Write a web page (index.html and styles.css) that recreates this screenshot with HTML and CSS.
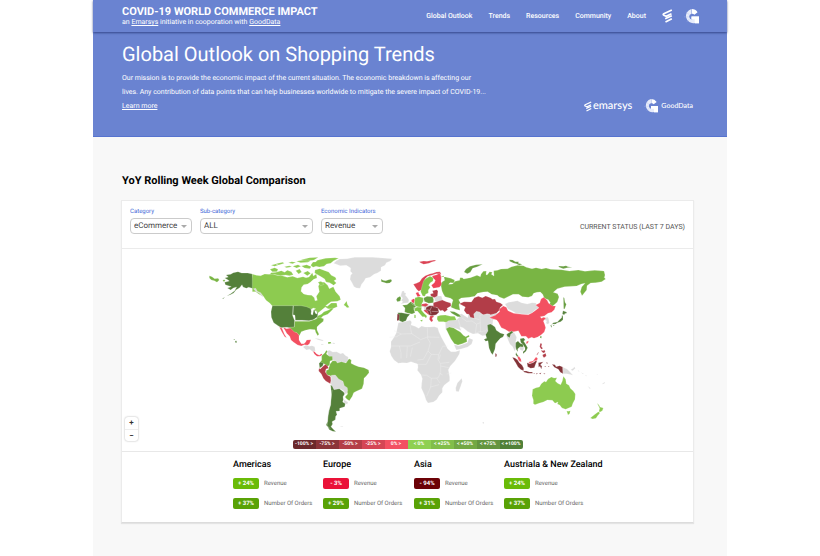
FILE: index.html
```html
<!DOCTYPE html>
<html lang="en">
<head>
<meta charset="utf-8">
<meta name="viewport" content="width=device-width, initial-scale=1">
<title>COVID-19 World Commerce Impact</title>
<link rel="stylesheet" href="styles.css">
</head>
<body>
<svg class="defs" aria-hidden="true">
  <symbol id="emarsys" viewBox="0 0 32 42">
    <path d="M29 3 5 14q-4 3 0 5l7 3 16-8M29 20 9 29M29 29 10 39" fill="none" stroke="#fff" stroke-width="5"/>
  </symbol>
  <symbol id="gooddata" viewBox="0 0 42 42">
    <path d="M21 0A20 20 0 1 0 30 39V40H42V21H21V29H25A8 8 0 1 1 21 13Z" fill="#e6ebfa"/>
    <path d="M22 0a20 20 0 0 1 16 9l-9 7a8 8 0 0 0-7-3zM21 21h21v19H30V29h-9z" fill="#fff"/>
    <path d="M5 8l10 8M0 22h13M8 36l8-9" stroke="#a9b8e8" stroke-width="1"/>
  </symbol>
</svg>
<div class="page">
  <header class="topbar">
    <div class="brand">
      <div class="brand-name">COVID-19 WORLD COMMERCE IMPACT</div>
      <div class="brand-sub">an <a href="#emarsys">Emarsys</a> initiative in cooporation with <a href="#gooddata">GoodData</a></div>
    </div>
    <nav class="nav">
      <a href="#outlook">Global Outlook</a>
      <a href="#trends">Trends</a>
      <a href="#resources">Resources</a>
      <a href="#community">Community</a>
      <a href="#about">About</a>
    </nav>
    <div class="marks">
      <svg class="mark-e"><use href="#emarsys"/></svg>
      <svg class="mark-g"><use href="#gooddata"/></svg>
    </div>
  </header>
  <section class="hero">
    <div class="intro">
      <h1>Global Outlook on Shopping Trends</h1>
      <p>Our mission is to provide the economic impact of the current situation. The economic breakdown is affecting our<br>lives. Any contribution of data points that can help businesses worldwide to mitigate the severe impact of COVID-19...<br><a href="#more">Learn more</a></p>
    </div>
    <div class="partners">
      <svg class="partner-e"><use href="#emarsys"/></svg><span class="word-e">emarsys</span>
      <svg class="partner-g"><use href="#gooddata"/></svg><span class="word-g">GoodData</span>
    </div>
  </section>
  <main>
    <h2>YoY Rolling Week Global Comparison</h2>
    <div class="card">
      <form class="filters">
        <div class="field"><label for="category">Category</label>
          <div class="pick"><select id="category"><option>eCommerce</option></select></div></div>
        <div class="field wide"><label for="sub">Sub-category</label>
          <div class="pick"><select id="sub"><option>ALL</option></select></div></div>
        <div class="field"><label for="indicator">Economic Indicators</label>
          <div class="pick"><select id="indicator"><option>Revenue</option></select></div></div>
        <div class="status">CURRENT STATUS (LAST 7 DAYS)</div>
      </form>
      <div class="map">
        <svg class="world" viewBox="-234 -3 1713 606" role="img" aria-label="World map of revenue change">
          <!-- North America -->
          <path class="g3" d="M28 77l8 3 8 6 10-1 4 5-7 7-8-5-9-2-6-6zM68 90l6-1 2 4-5 2z"/>
          <path class="g5" d="M157 72l-14-3-18 0-11-4-14 3-8 5-14 2 7 6-11 3 9 5 5 4-14 4 2 7 9 3 9 3-12 4 10 6 8-6 10-3-6 11-12 9-12 7 11-4 10-5 7-9 11-7 7-9 3 7 10 4 7-3 18 5zM66 146l9-5-5 5zM100 269l3-2 2 3zM105 273l4-1 2 5-4 2z"/>
          <path class="g1" d="M157 72l12 4 13 1 12-5 12 1 11-2 14 5 15 1 16 5 16-3 14 5 17-4 9 3 9-2 10-13 3 10 9-6 2 12-10 4-10 9-8 5-12 2-6 8-2 12 8 8 12 3 12 1 8 7 2 9 7-1-3-12 9-14-3-16 6-13 12 1 10 9 5 10 12-6 7 15 12 14 3 10-10 5-19 1-16 12 5 2 12-10 16 0 2 11-16 7-12-1-8-5-12 10-11 9-13 4-7 9-6-2 5-9-12-6-10-12-18-6-17 0H217l-8-9-11-8-7-11-14-7-10-8-10 0z"/>
          <path class="g1" d="M210 58l14-5 10 5-3 7-14 0zM228 67l16-5 10 5 8-6 12 4 6 9-12 3-11-2-16 2-20-4-12 1 4-6zM213 46l14-4 8 3-11 4zM228 41l20-4 5 3-17 5zM253 50l15-3 8 3-16 3zM265 38l10-3 13 2-10 4zM278 49l16-5 9 5-13 5zM287 62l12-5 6 9-9 6zM289 34l25-5 20 2-10 6-22 1zM304 48l16-4 14 6-5 6-15-2zM310 69l13-6 9 7-10 7zM345 60l14-4 16 6 11 4 8 10 12 6 3 6-7 4 7 7-8 7-12-8-11-2-4-9-13-8-8-5-9-5zM332 46l7-10 8 0 5-5 25-6 28-2 11 2-15 7-9 8-12 2-8 7-14 2-10-2-9 3zM303 29l26-6 26-1-13 8-20 4zM354 97l9-3 9 9-10 4z"/>
          <path class="g2" d="M348 212l4-14 12-5 8-8 12-4 12-7 4 2-7 8-10 9-14 5-8 9z"/>
          <path class="g1" d="M431 165l9-12 2 10 6 9-7 1-4-4z"/>
          <path class="gy" d="M160 116l7-1 5 9 10 4 9 12-5-1-9-10-9-4z"/>
          <path class="g5" d="M217 167h62l-1 30 6 15-1 20-12 2-10-2-18 1-9-6-13-9-7-16-1-17zM280 167h23l16 3 16 7 7 1 5 7 3-4 4 10-2 10-12 8-13 3-21-1H286l-1-15-6-2z"/>
          <path class="w" d="M332 179l8-5 7 2-6 4-3 15-5-2 1-11zM344 182l6 2 2 9-6-3z"/>
          <path class="g3" d="M284 214h44l20-7 8-5 15 4-1 8-11 9-8 8 0 9 6 13-4 4-6-10-2-8-15-1-14 3-12 4-6 12-9-9-8 2-10-12-2-6 14-1z"/>
          <path class="r1" d="M249 232l11 4 11-2 12 12 8 2 6 8 0 14 7 11 8 0 5-5 3-6 13-1-5 13-6 4-9-2-9 4-11-3-12-8-8-7-4-11-9-9-5-9zM238 231l8 4 7 17 7 11-6-3-8-13z"/>
          <path class="gy" d="M309 291l9-6 10 4 8-2 8 3 2 13-8 2-9-7-10 2zM344 265l12 1 15 5-4 2-13-4zM398 278l7 1-1 3-6-1zM363 282h7v2h-7z"/>
          <path class="r2" d="M339 304l5 1 6 7 8 4 6-5 3 3-7 5-9 0-8-7z"/>
          <path class="g3" d="M384 276l8 0 2 4-9 2z"/>
          <path class="gy" d="M401 40l8-8 10-5 22-1 23-4 55 0 28 2 29 2-5 7-12 5-4 8-12 6 0 10-11 7-10 4-12 9-13 3-5 9-7 8-5 13-10-1-8-4-6-12-6-10 2-12 5-6-6-6 1-10-13-8-18 1z"/>
          <path class="g4" d="M543 87l6 4 8 1 9-3 7-1 3 5-7 6-9 1-10-3-6-2z"/>
          <!-- South America -->
          <g transform="translate(300 270)">
            <path class="gy" d="M80 33l9-2 9 5 12-1 11 6 8-2 8 8 8 4-2 16-29 4-18-13-10-10z"/>
            <path class="g3" d="M65 47l9-8 5-8 3 3-3 8 9 7 9 0 1 12-8 2-1 13-7 3-9-7-13-5 5-6z"/>
            <path class="g3" d="M90 72l8-10 10 1 4 6 12-4 14 4 9-13 7 4-1 10 10 5 13 5 16 3 14 7 1 8-8 10-7 7-1 16-5 15-17 8-8 4-4 11-9 13-7-4-6-7 8-9-3-12-9-6-3-12-12-8-14-8-11-9-10-2-3-5 1-9 6-2z"/>
            <path class="g5" d="M57 70l5-4 9 4-3 8-9 6z"/>
            <path class="r4" d="M57 85l4 2 9-9 7-5 6 6 3 6-8 2-2 9 6 9 10 5 1 12-2 9-14-8-7-8-6-13-8-9z"/>
            <path class="gy" d="M94 106l12-1 10 12 13 7 4 13 9 6 1 9-4 10-7-2 1-6-13-8-18 6-6-6-3-15zM132 179l12 8-2 6-11-4z"/>
            <path class="g5" d="M92 134l5 5 5 10 16-3 13 10 3 6-5 8 1 9-2 7 8 5-2 9-15 5 0 8-11 1 3 10-4 5-1 10-10 6 2 7-5 8 7 8 8 7-10-1-10-5-5-9-5-5 5-11 1-17 3-16 5-16 2-31z"/>
            <path class="border" d="M96 150l-3 24-5 30-5 29-2 24 9 9"/>
            <path class="gy" d="M119 260l11-2-3 3z"/>
          </g>
          <!-- Europe -->
          <g transform="translate(540 0)">
            <path class="r3" d="M118 35l13-2 10 1 22-4 6 2-14 4-8 4-16 3-10-5zM100 103l9-3 10-5 7-10 10-8 13-5 10-2 10-4 11-1 4 8-15-2-14 5-12 3-8 8-3 14-3 17-13 6-6-6z"/>
            <path class="g2" d="M126 109l5-17 8-7 11-6 10 4-1 10-8 5-5 8 5 6-6 8 0 9-8 4-2 6-7-1-6-13z"/>
            <path class="r2" d="M156 78l14-4 10-5 4 12-1 14 4 8-9 9-18 3-6-9 9-8 3-7-6-6z"/>
            <path class="r4" d="M157 122l13-3 4 4-2 18-9 2-10-4-2-7 9-2z"/>
            <path class="gy" d="M163 143l9-5 12 0 4 11-4 6-19-1zM66 124l7-2-1 5 6 3-2 6 5 5 6 9-2 8-12 1-11 3 7-7-5-3 4-8-6-6zM130 166l28 0 18 10-6 17-20 3-17-14z"/>
            <path class="g4" d="M52 143l8-4 3 5-2 9-9 2-3-6z"/>
            <path class="r2" d="M107 129l8-3 2 6 5 5-9 4zM94 150l7-4 4 3-3 11-7-3z"/>
            <path class="g2" d="M105 143l12-3 12 3 1 10-5 10 5 5-11 4-12-3-4-9zM103 174l10-3 12 1-1 8 8 10 9 8-3 7-4-5-7 0-9-10-6-7-8 1zM120 211l8-2-2 6zM103 194l4 1 0 9-4 0z"/>
            <path class="g4" d="M131 144l10-5 17 1 3 9-1 9-14 2-14-6zM67 166l14-2 11-9 10 6 6 8-7 7 4 12-9 4-12-2-10-4 1-12z"/>
            <path class="g5" d="M53 188l12 0 20 4 5 1-8 9-4 10-10 5-10-5z"/>
            <path class="r5" d="M52 192l6 1-1 18-6 1z"/>
            <path class="r3" d="M124 163l14-3 8 4-9 6-11-2zM131 180l10-1 6 9 5 9-9-5-10-8zM150 198l9-1 3 3-6 4 3 8-5 4-6-8z"/>
            <path class="r5" d="M139 172l10-5 13 1 12 6 3 13-8 7-13 3-9-3-4-10-6-4z"/>
            <path class="r4" d="M160 158l14-4 13-4 12 5 13 4 1 9-12 7 2 4-9 7-6-5-7 1-10-10-11-1z"/>
            <path class="border" d="M139 179l11 2 3 11M150 181l5-11M155 184l20 1M94 160l12 8M134 150l-7 12M108 174l-8-2"/>
            <path class="g1" d="M172 199l10-3 14-1 16 4 12 0 5 10-3 5-15 0-10 4-10-3-15 0-5-7z"/>
          </g>
          <!-- Africa and Middle East -->
          <g transform="translate(540 180)">
            <path class="gy" d="M55 38l18-3 17-4 5 5-2 9 12 4 11 6 9-7 10 3 15 0 13-1 10 3 4 13 8 17 11 20 7 13 10 9 13 0 14-4-2 11-13 21-14 15-6 11 4 22 0 12-16 12-6 10 0 12-10 10-7 12-10 7-16 3-6-9-5-16-9-20 1-14 2-14-4-12-11-13 2-9-1-10-9-3-11-4-12 4-14-1-12 2-13-10-8-12-5-14 4-13 0-16 9-13 7-14zM245 205l2 9-6 18-5 13-8-1-1-10 5-15zM196 38l10-6 23-2 9-8-3-8 10-3 18 12 3-14 18-12 24 5 22 3 24 6-8 12-7 8-2 19-13 15 0 10-17 2-13-7-15 2-15-7-15-12-10-3 5 12-11-5-14-4-11 1-7 8-4-4zM222 104l15 3 25-9 5-14 12 5-4 13-12 9-20 6-14 3z"/>
            <path class="g3" d="M198 56l10-5 13 3 11 7 9 5 9 10 7 4 10-5 1 5-8 4 1 11-14 6-13 4-11-4-10-14-7-14z"/>
            <path class="g4" d="M209 4l14 1 14 8 6 7-10 0-18-10z"/>
            <path class="border" d="M42 62l22 10 31-1 27 18 20-8 36 1M90 45l5 27M28 82l22-2 14-8M142 52l1 33 8 14-7 24 10 10 22 1 12-25 16-1M32 108l25 0 34 0 29-12M58 108l5 20 0 18M82 110l-2 34M91 140l6-27M112 150l18-2 14-25M113 163l26 0 15-30M125 195l15 1 14 9 20-1 8-16 0-26-8-13 2-16M154 205l-2 26-12 28M170 205l10 14M152 231l25-7M182 168l24 5M182 160l26-3M177 149l4-15M200 192l14-3M178 189l10 6M235 30l9 28M246 24l14 10 16-1 14 10-4 27M262 9l16 14 20 6M290 42l27-9 20-5M286 70l25-10 18-26"/>
          </g>
          <!-- Asia -->
          <g transform="translate(840 0)">
            <path class="g3" d="M-118 80l14 1 16 4 12 5-2 9-12-1-4 5 11-1 8-8 14-3 1-8 7 0 4 4 20-4 20-7 10 4 2-7 7-9 9-1-1 11 4 0 7-9 8 2-3 6 8 5-1-16 11-1 11-4 20-1 12-6 18-4 17 1 9 5 17 4 12-3 17 4 13-3 14 4 32 1 24 4 27-3 20 4 29-3 28 2 3 12-2 8 4 4-12 8-18 3-15 1-11 8-1 13-14 17-5-12 4-14 10-11-11 2-14 6-36 2-22 6-12 11 13 4 4 10-5 15-16 14-6 3-5-5 6-10-6-9-12-4-5-12-7-7-10 1-10 3-5 8-11 4-18-2-11-7-17 0-15 7-12 6-14-5-6-5-17-3-12-8-13 1-18 4-8 9-16 3-24 2-8 5 5 9-4 6 3 17-13-3-14-6 2-9 4-13-7-5-17-5-5-8-4-9-3-15 3-12 8-5-3-14z"/>
            <path class="g4" d="M-48 66l6-9 12-8 18-5 20-1-16 7-14 5-7 12-9 4zM88 29l10 1 8 5 10 0-1 5 12 3-9 3-9-5-9-2-11-5zM235 48l15 1 8-2 6 3 13 2-15 1-12 3-12-4zM250 142l3 2 2 13 4 6-5 14-3-1z"/>
            <path class="r4" d="M-62 161l14-6 22 1 9-13 12-4 12 4 10-5 14 5 7 5 7-1 4 8 12 4 8 6-8 7-3 9-9 9-17 4-11-3-10 5-12-10-10-2-8 8 2 13-12-3-4-9-7-1-8-11 4-10z"/>
            <path class="gy" d="M75 162l11-5 10-2 16-3 12 6 18 4 14-4 12 1 1 6 9 5-3 5-10 5-10 10-13 3-17-1-17-2-11-7-13-6zM193 207l9-7 4 6 2 12-4 5-6-3 2-8-7-3zM0 195l28-3 8 22-9 10-9 18-16 4zM78 254l15-7 10 1 7 14-3 13 2 19-5 10-6-14-8-7-7-16zM123 286l9 7-3 10-9-4-2-9z"/>
            <path class="r1" d="M28 203l10-4 8-3 13-11-2-7 13-10 9 4 5 10 17 8 25 3 19 1 12-6 11-8 9-7-10-8 12-6 4-12 8-5 10 8 5 10 12 8 9 0-4 11-8 8-11 3-11 8-12 2 3 5 7-3 7 2-8 9 4 10 3 10-4 13-10 9-10 6-11 4-7-3-10 4-7-7-14 0-9-17-14 3-14 0-12-7-11-5-5-9-4-8-5-6zM139 275l7-3-2 7-5 3z"/>
            <path class="g5" d="M22 225l9-3 7 4 7 5 4 10 12 8 12 4-4 8-8 4-8 9-6 7-2 16-7 17-5-6-6-14-3-22-7 2-5-6 8-3-3-11 7-11zM80 253l15-10 5 4-8 6-3 10-7-4zM107 278l7-5 6 7 9 3 1 8-10-1-7 7 1 8-5-6-2-9zM120 266l11-2 5 6-5 3 6 10 6 10-5 11-9 7 0-6 6-5 0-7-7-10-6-6zM249 182l10 4 2 3-7 2-1 4-6-3zM246 194l3 6 0 9-7 6-10 3-5 4-9 0-5 3 7-7 12-2 8-8 5-5zM211 225l5 2-2 6zM219 225l6-1-5 4z"/>
            <path class="g4" d="M180 259l5 0-1 6-4-2z"/>
            <path class="r5" d="M46 309l4 4 0 6-4 2z"/>
          </g>
          <!-- South-east Asia and Oceania -->
          <g transform="translate(840 240)">
            <path class="g5" d="M108 67l4 7 4 5-4 2-5-7z"/>
            <path class="r1" d="M112 79l6 1 5 8 1 8-7-3-3-7zM146 96l13-3 9-12 5 4-2 7-8 0-6 6-10 2z"/>
            <path class="r5" d="M97 82l8 2 8 6 5 8 8 7 5 9 0 8-8-3-9-8-7-13-5-7zM131 123l8 0 9 3 9 0 1 4-14 0-13-4zM141 98l8 3 10-3 7-5 5 0-4 9-4 11-11 2-9-5zM175 98l8-1 7-2-6 6-3 4 5 3-2 10-4-9-4 3zM161 129l4 1-3 2zM168 130l7 1-6 2zM177 130l7-2-3 5zM190 131l6-2-3 4zM199 95l4 4-2 4zM193 108l5 0-2 3zM204 108l5 1-4 2zM216 103l9 1 3 6 11-3 9 4 1 20-8-4-6-9-12-6z"/>
            <path class="r4" d="M181 40l5 1-2 9 5 5-5 3-5-8zM183 60l6 2 5-2 2 6-5 3-5-3zM188 74l9-4 2 8-7 5-4-5zM170 74l5-8 1 2-5 8z"/>
            <path class="gy" d="M249 112l12 5 7 7 11 12-11-3-9-2-10 0zM272 119l8-4 3-5 3 5-8 7zM293 121l5 2-1 2zM303 127l8 4-2 2zM314 134l6 3-1 2zM323 168l9 7-3 1zM367 161l7-5 1 3-7 4zM8 276l4 1 0 4-4-1zM350 132l2 0 1 4z"/>
            <path class="g1" d="M158 178l10-5 10-2 6-10 9-7 5 2 6-9 10-6 8 3 9-1-5 10 7 7 9 4 5-11 3-14 7 9 2 13 8 5 4 9 9 8 6 9-1 16-6 11-4 11-9 4-9 4-11-4-7-9-7-3 2-6-9 4-8-9-15-1-12 6-13 4-12 4-5-3 0-11-4-13zM260 243l5 1 6-2-2 9-5 4zM351 219l6 6 3 6 10 3-3 8-8 5-2-4 2-8zM355 245l5 4-7 8-5 8-10 2-7-3 11-9z"/>
          </g>
        </svg>
        <div class="zoom">
          <button type="button" aria-label="Zoom in">+</button>
          <button type="button" aria-label="Zoom out">−</button>
        </div>
        <div class="legend">
          <span class="n100">-100% &gt;</span><span class="n75">-75% &gt;</span><span class="n50">-50% &gt;</span><span class="n25">-25% &gt;</span><span class="n0">0% &gt;</span><span class="p0">&lt; 0%</span><span class="p25">&lt; +25%</span><span class="p50">&lt; +50%</span><span class="p75">&lt; +75%</span><span class="p100">&lt; +100%</span>
        </div>
      </div>
      <div class="regions">
        <section><h3>Americas</h3>
          <div class="stat"><b class="lime">+ 24%</b>Revenue</div>
          <div class="stat"><b class="green">+ 37%</b>Number Of Orders</div></section>
        <section><h3>Europe</h3>
          <div class="stat"><b class="red">- 3%</b>Revenue</div>
          <div class="stat"><b class="green">+ 29%</b>Number Of Orders</div></section>
        <section><h3>Asia</h3>
          <div class="stat"><b class="maroon">- 94%</b>Revenue</div>
          <div class="stat"><b class="green">+ 31%</b>Number Of Orders</div></section>
        <section><h3>Austriala &amp; New Zealand</h3>
          <div class="stat"><b class="lime">+ 24%</b>Revenue</div>
          <div class="stat"><b class="green">+ 37%</b>Number Of Orders</div></section>
      </div>
    </div>
  </main>
</div>
</body>
</html>
```
FILE: styles.css
```css
* { box-sizing: border-box; }
body { margin: 0; background: #fff; font-family: Roboto, "Liberation Sans", sans-serif; text-rendering: geometricPrecision; }
h1, h2, h3, p { margin: 0; }
.defs { position: absolute; width: 0; height: 0; }
.page { max-width: 634px; min-height: 100vh; margin: 0 auto; background: #f8f8f8; }

.topbar {
  position: relative;
  display: flex;
  align-items: center;
  height: 32px;
  padding: 0 28px 0 29px;
  background: #6a83d1;
  color: #fff;
  box-shadow: 0 1px 2px rgba(30, 45, 110, .7);
}
.brand { flex: 1; }
.brand-name { font-size: 11px; line-height: 12px; font-weight: 700; }
.brand-sub { font-size: 7px; line-height: 8px; }
a { color: inherit; }
.nav { display: flex; gap: 16px; font-size: 7px; font-weight: 500; }
.nav a { text-decoration: none; }
.marks { display: flex; align-items: center; gap: 11px; margin-left: 16px; }
.mark-e { width: 11px; height: 14px; }
.mark-g { width: 15px; height: 15px; }

.hero {
  display: flex;
  justify-content: space-between;
  align-items: flex-end;
  height: 105px;
  padding: 0 34px 23px 29px;
  background: #6a83d1;
  border-bottom: 1px solid #5673cf;
  color: #fff;
}
.intro { white-space: nowrap; }
h1 { font-size: 20px; line-height: 24px; font-weight: 400; }
.intro p { margin-top: 5px; font-size: 7px; line-height: 14px; }
.partners { display: flex; align-items: center; }
.partner-e { width: 8px; height: 11px; margin-right: 1px; }
.partner-g { width: 14px; height: 14px; margin: 0 3px 0 12px; }
.word-e { font: 500 11px/12px Lato, sans-serif; }
.word-g { font: 500 7px/12px Lato, sans-serif; }

main { padding: 37px 33px 32px 28px; }
h2 { padding-left: 1px; font-size: 11px; line-height: 14px; font-weight: 700; color: #000; }
.card {
  margin-top: 12px;
  background: #fff;
  border: 1px solid #ebebeb;
  border-bottom-color: #dcdcdc;
  box-shadow: 0 1px 1px #e4e4e4;
}

.filters {
  display: flex;
  gap: 8px;
  height: 48px;
  padding: 7px 8px 0;
  border-bottom: 1px solid #ebebeb;
}
.field { width: 62px; }
.field.wide { width: 113px; }
.field label { display: block; margin-bottom: 2px; font-size: 6px; line-height: 8px; color: #4468d8; white-space: nowrap; }
.pick { display: grid; align-items: center; }
.pick select, .pick::after { grid-area: 1 / 1; }
.pick select {
  appearance: none;
  width: 100%;
  height: 16px;
  padding: 0 3px;
  border: 1px solid #cbcbcb;
  border-radius: 4px;
  background: #fff;
  color: #444;
  font: 8px/14px Roboto, sans-serif;
  text-rendering: inherit;
}
.pick::after {
  content: "";
  justify-self: end;
  margin-right: 5px;
  border: 3px solid transparent;
  border-top-color: #aaa;
  border-bottom: 0;
  pointer-events: none;
}
.status { margin: 15px 0 0 auto; font-size: 7px; line-height: 8px; color: #555; }

.map { display: grid; border-bottom: 1px solid #e8e8e8; }
.map > * { grid-area: 1 / 1; }
.world { display: block; width: 100%; }
.world path { stroke: #fff; stroke-opacity: .6; stroke-width: 1; stroke-linejoin: round; }
.world .border { fill: none; stroke: #f0f0f0; stroke-width: 2; }
.w { fill: #fff; }
.gy { fill: #dcdcdc; }
.g1 { fill: #8dcb50; }
.g2 { fill: #83c64a; }
.g3 { fill: #79b544; }
.g4 { fill: #679d40; }
.g5 { fill: #54803a; }
.r1 { fill: #f35061; }
.r2 { fill: #ee4459; }
.r3 { fill: #db4354; }
.r4 { fill: #b23d48; }
.r5 { fill: #823237; }

.zoom {
  align-self: end;
  display: flex;
  flex-direction: column;
  width: 13px;
  margin: 0 0 10px 3px;
  border-radius: 3px;
  background: #fff;
  box-shadow: 0 0 2px rgba(0, 0, 0, .35);
}
.zoom button {
  height: 12px;
  padding: 0;
  border: 0;
  background: none;
  color: #333;
  font: 700 8px/12px Roboto, sans-serif;
}
.zoom button + button { border-top: 1px solid #eee; }

.legend {
  place-self: end center;
  display: grid;
  grid-template-columns: repeat(10, 23px);
  margin-bottom: 2px;
  border-radius: 2px;
  overflow: hidden;
  color: #fff;
  font-size: 5px;
  line-height: 9px;
  font-weight: 700;
  text-align: center;
  white-space: nowrap;
}
.n100 { background: #6b292c; }
.n75 { background: #8b3439; }
.n50 { background: #b43e48; }
.n25 { background: #d54655; }
.n0 { background: #f35162; }
.p0 { background: #8fd052; }
.p25 { background: #82be4a; }
.p50 { background: #73a844; }
.p75 { background: #64953f; }
.p100 { background: #518038; }

.regions {
  display: grid;
  grid-template-columns: 90px 91px 90px 1fr;
  padding: 8px 0 13px 111px;
}
h3 { margin-bottom: 7px; font-size: 9px; line-height: 11px; font-weight: 500; color: #000; white-space: nowrap; }
.stat { display: flex; align-items: center; gap: 5px; font-size: 6px; line-height: 11px; color: #666; white-space: nowrap; }
.stat + .stat { margin-top: 9px; }
.stat b { width: 26px; border-radius: 2px; color: #fff; font-weight: 700; text-align: center; }
.lime { background: #6abb08; }
.green { background: #59a206; }
.red { background: #ea1238; }
.maroon { background: #6c0207; }
```
